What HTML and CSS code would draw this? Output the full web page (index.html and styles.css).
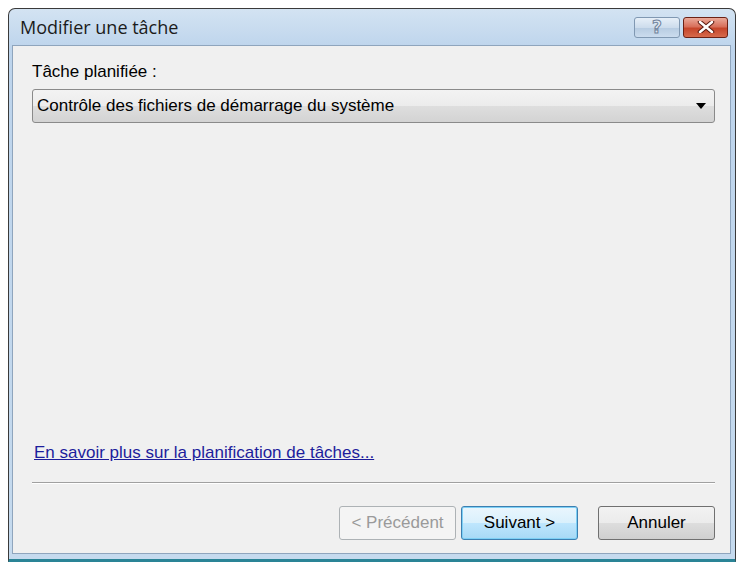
FILE: index.html
```html
<!DOCTYPE html>
<html lang="fr">

<head>
    <meta charset="UTF-8" />
    <title>Modifier une tâche</title>
    <link rel="stylesheet" href="styles.css">
</head>

<body>
    <div class="window">
        <div class="titlebar">
            <span class="title">Modifier une tâche</span>
            <div class="caption-buttons">
                <span class="cap-btn help">?</span>
                <span class="cap-btn close">
                    <svg width="18" height="12" viewBox="0 0 18 12">
                        <path d="M3 1 L15 11 M15 1 L3 11" stroke="#5a1a10" stroke-width="4.5" stroke-linecap="round" />
                        <path d="M3 1 L15 11 M15 1 L3 11" stroke="#ffffff" stroke-width="2.5" stroke-linecap="round" />
                    </svg>
                </span>
            </div>
        </div>

        <div class="client">
            <label class="field-label">Tâche planifiée :</label>
            <div class="combo">
                <span>Contrôle des fichiers de démarrage du système</span>
                <span class="combo-arrow"></span>
            </div>

            <div class="spacer"></div>

            <a class="help-link" href="#">En savoir plus sur la planification de tâches...</a>
            <hr class="separator">

            <div class="buttons">
                <button class="btn" disabled>&lt; Précédent</button>
                <button class="btn default">Suivant &gt;</button>
                <button class="btn cancel">Annuler</button>
            </div>
        </div>
    </div>
</body>

</html>
```

FILE: styles.css
```css
body {
    margin: 0;
    background: #ffffff;
    font-family: 'Liberation Sans', Arial, sans-serif;
    font-size: 17px;
    color: #000;
    overflow: hidden;
}

.window {
    margin: 8px 0 0 8px;
    width: 719px;
    height: 545px;
    border: 1px solid #3a3a3a;
    border-bottom: 4px solid #2a8496;
    border-radius: 7px 7px 0 0;
    background: linear-gradient(#d3e3f2, #bdd4ec 40px, #c5daee);
    padding: 0 4px 5px 3px;
    display: flex;
    flex-direction: column;
}

.titlebar {
    height: 36px;
    display: flex;
    align-items: center;
    padding-left: 8px;
    flex-shrink: 0;
}

.title {
    font-family: 'Open Sans', 'Liberation Sans', sans-serif;
    font-size: 18px;
    color: #1b1b1b;
}

.caption-buttons {
    margin-left: auto;
    margin-right: 3px;
    display: flex;
    gap: 3px;
}

.cap-btn {
    height: 19px;
    border-radius: 3px;
    display: flex;
    align-items: center;
    justify-content: center;
}

.help {
    width: 44px;
    border: 1px solid #8098b2;
    background: linear-gradient(#e6eff8, #cddcec 50%, #b6cbe1 51%, #cbdcee);
    color: #dfe7f0;
    font-family: 'DejaVu Sans', sans-serif;
    font-weight: bold;
    font-size: 17px;
    line-height: 19px;
    -webkit-text-stroke: 1px #6f829b;
}

.close {
    width: 43px;
    border: 1px solid #6b2115;
    background: linear-gradient(#eaa999, #d8705b 45%, #c6462b 55%, #d66a4c);
}

.client {
    flex: 1;
    background: #f0f0f0;
    border: 1px solid #8fa5bd;
    padding: 16px 15px 13px 19px;
    display: flex;
    flex-direction: column;
}

.field-label {
    line-height: 20px;
    color: #000;
}

.combo {
    margin-top: 7px;
    height: 32px;
    border: 1px solid #8a8a8a;
    border-radius: 3px;
    background: linear-gradient(#f3f3f3, #ececec 50%, #dedede 51%, #d3d3d3);
    display: flex;
    align-items: center;
    padding: 0 8px 0 4px;
}

.combo-arrow {
    margin-left: auto;
    width: 0;
    height: 0;
    border-left: 5px solid transparent;
    border-right: 5px solid transparent;
    border-top: 6px solid #000;
}

.spacer {
    flex: 1;
}

.help-link {
    color: #1d1d9c;
    text-decoration: underline;
    line-height: 20px;
    align-self: flex-start;
    margin-left: 2px;
}

.separator {
    margin: 19px 0 22px 0;
    border: none;
    border-top: 1px solid #a0a0a0;
    border-bottom: 1px solid #ffffff;
}

.buttons {
    display: flex;
    justify-content: flex-end;
    gap: 5px;
}

.btn {
    width: 117px;
    height: 34px;
    font-family: 'Liberation Sans', Arial, sans-serif;
    font-size: 17px;
    border: 1px solid #707070;
    border-radius: 3px;
    background: linear-gradient(#f2f2f2, #ebebeb 50%, #dddddd 51%, #cfcfcf);
    color: #000;
    padding: 0;
}

.btn:disabled {
    border-color: #adb2b5;
    background: #f4f4f4;
    color: #9a9a9a;
}

.btn.default {
    border: 1px solid #3c7fb1;
    box-shadow: inset 0 0 0 1px #7ed0f5;
    background: linear-gradient(#eaf6fd, #d9f0fc 50%, #bee6fd 51%, #a7d9f5);
}

.btn.cancel {
    margin-left: 15px;
}
```
